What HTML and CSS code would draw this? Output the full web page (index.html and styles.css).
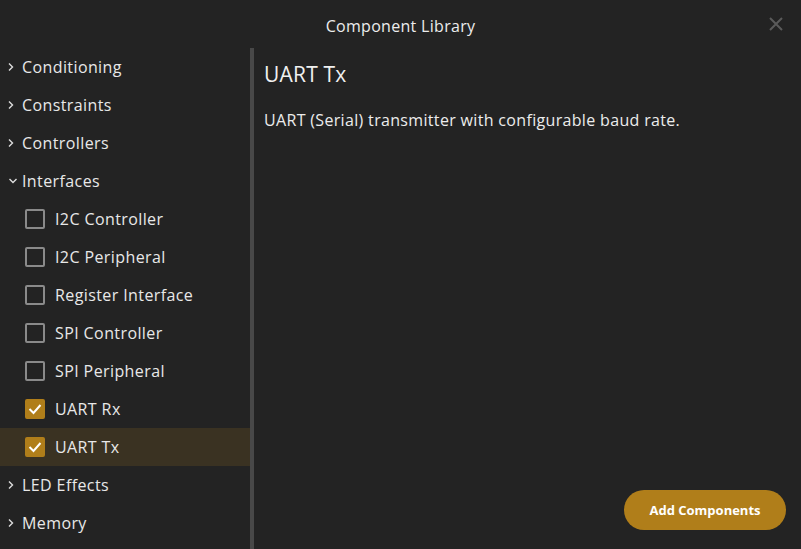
FILE: index.html
```html
<!DOCTYPE html>
<html>
<head>
<meta charset="utf-8">
<link rel="stylesheet" href="styles.css">
</head>
<body>
<div class="dialog">
  <header class="header">
    <span class="title">Component Library</span>
    <span class="close">
      <svg width="16" height="16" viewBox="0 0 16 16"><path d="M2 2L14 14M14 2L2 14" stroke="#5a5a5a" stroke-width="2"/></svg>
    </span>
  </header>
  <div class="body">
    <nav class="sidebar">
      <div class="row cat"><span class="chev"><svg width="6" height="10" viewBox="0 0 6 10"><path d="M1 1.5L4.5 5L1 8.5" fill="none" stroke="#ddd" stroke-width="1.4"/></svg></span>Conditioning</div>
      <div class="row cat"><span class="chev"><svg width="6" height="10" viewBox="0 0 6 10"><path d="M1 1.5L4.5 5L1 8.5" fill="none" stroke="#ddd" stroke-width="1.4"/></svg></span>Constraints</div>
      <div class="row cat"><span class="chev"><svg width="6" height="10" viewBox="0 0 6 10"><path d="M1 1.5L4.5 5L1 8.5" fill="none" stroke="#ddd" stroke-width="1.4"/></svg></span>Controllers</div>
      <div class="row cat"><span class="chev"><svg width="10" height="6" viewBox="0 0 10 6"><path d="M1.5 1L5 4.5L8.5 1" fill="none" stroke="#ddd" stroke-width="1.4"/></svg></span>Interfaces</div>
      <div class="row item"><span class="box"></span>I2C Controller</div>
      <div class="row item"><span class="box"></span>I2C Peripheral</div>
      <div class="row item"><span class="box"></span>Register Interface</div>
      <div class="row item"><span class="box"></span>SPI Controller</div>
      <div class="row item"><span class="box"></span>SPI Peripheral</div>
      <div class="row item"><span class="box checked"><svg width="14" height="12" viewBox="0 0 14 12"><path d="M1.5 6L5.5 10L12.5 2" fill="none" stroke="#fff" stroke-width="2"/></svg></span>UART Rx</div>
      <div class="row item selected"><span class="box checked"><svg width="14" height="12" viewBox="0 0 14 12"><path d="M1.5 6L5.5 10L12.5 2" fill="none" stroke="#fff" stroke-width="2"/></svg></span>UART Tx</div>
      <div class="row cat"><span class="chev"><svg width="6" height="10" viewBox="0 0 6 10"><path d="M1 1.5L4.5 5L1 8.5" fill="none" stroke="#ddd" stroke-width="1.4"/></svg></span>LED Effects</div>
      <div class="row cat"><span class="chev"><svg width="6" height="10" viewBox="0 0 6 10"><path d="M1 1.5L4.5 5L1 8.5" fill="none" stroke="#ddd" stroke-width="1.4"/></svg></span>Memory</div>
    </nav>
    <div class="divider"></div>
    <main class="detail">
      <h1 class="name">UART Tx</h1>
      <p class="desc">UART (Serial) transmitter with configurable baud rate.</p>
      <div class="actions"><button class="add">Add Components</button></div>
    </main>
  </div>
</div>
</body>
</html>
```
FILE: styles.css
```css
* { box-sizing: border-box; }
html, body { margin: 0; padding: 0; }
body {
  background: #232323;
  color: #ececec;
  font-family: "Open Sans", "Noto Sans", sans-serif;
  width: 801px;
  height: 549px;
  overflow: hidden;
}
.dialog { display: flex; flex-direction: column; height: 549px; }
.header {
  height: 48px;
  display: flex;
  align-items: center;
  justify-content: center;
  position: relative;
}
.title { font-size: 16px; color: #ececec; margin-top: 4px; letter-spacing: 0.3px; font-weight: 500; }
.close { position: absolute; right: 17px; top: 16px; width: 16px; height: 16px; }
.close svg { display: block; }
.body { flex: 1; display: flex; min-height: 0; }
.sidebar { width: 250px; display: flex; flex-direction: column; padding-top: 0; }
.row {
  height: 38px;
  display: flex;
  align-items: center;
  font-size: 16px;
  color: #e8e8e8;
  font-weight: 500;
  letter-spacing: 0.4px;
}
.cat { padding-left: 8px; }
.chev { width: 14px; display: flex; align-items: center; }
.chev svg { display: block; }
.item { padding-left: 25px; }
.box {
  width: 20px; height: 20px;
  border: 2px solid #8a8a8a;
  border-radius: 2px;
  margin-right: 10px;
  display: flex; align-items: center; justify-content: center;
}
.box.checked { background: #b07e1a; border-color: #b07e1a; }
.box svg { display: block; }
.selected { background: #3a3222; }
.divider { width: 4px; background: #484848; }
.detail { flex: 1; padding: 10px 0 0 10px; display: flex; flex-direction: column; }
.name { font-size: 21px; font-weight: 400; margin: 0; line-height: 32px; color: #f0f0f0; letter-spacing: 0.2px; }
.desc { font-size: 16px; margin: 18px 0 0; line-height: 24px; color: #ececec; letter-spacing: 0.33px; font-weight: 500; }
.actions { margin-top: auto; display: flex; justify-content: flex-end; padding: 0 15px 19px 0; }
.add {
  background: #b07e1a;
  color: #fff;
  border: none;
  border-radius: 20px;
  width: 162px;
  height: 40px;
  font-family: inherit;
  font-size: 13px;
  font-weight: 700;
}
```
